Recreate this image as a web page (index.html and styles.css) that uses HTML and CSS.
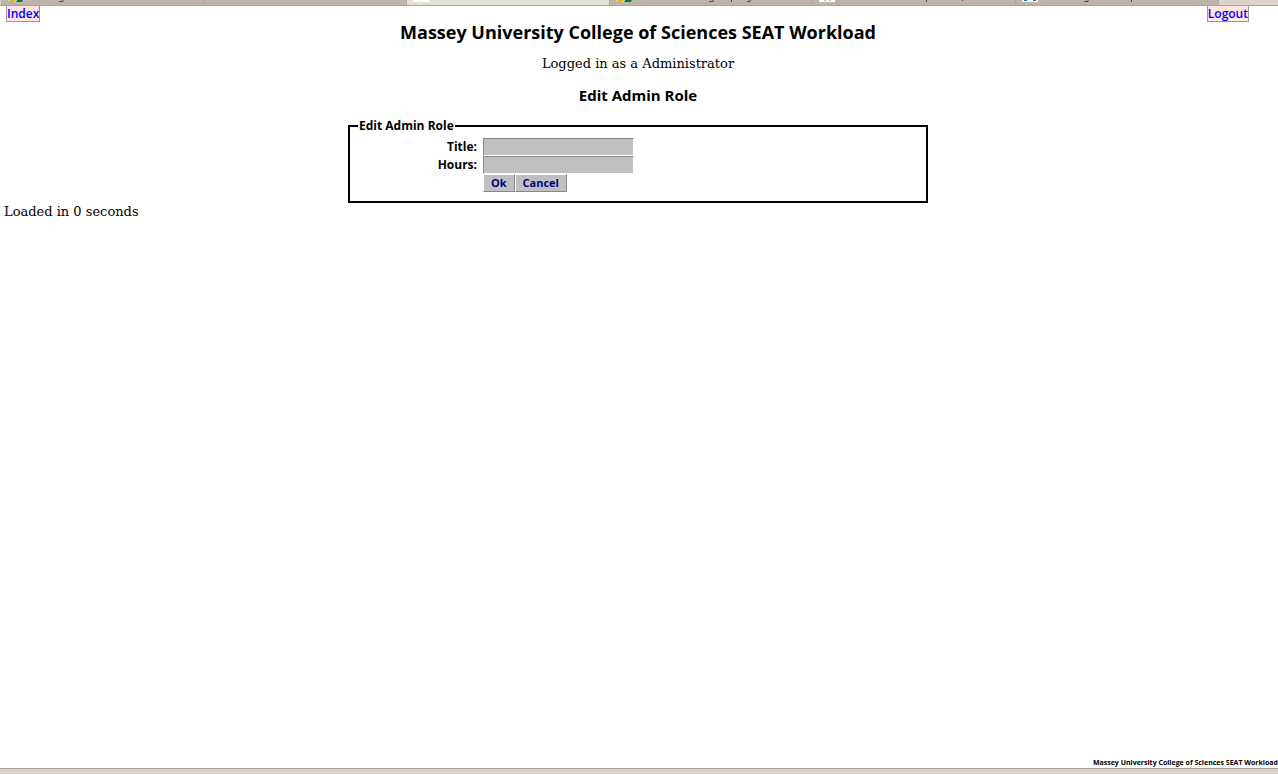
FILE: index.html
```html
<!DOCTYPE html>
<html lang="en">
<head>
<meta charset="utf-8">
<title>Edit Admin Role</title>
<link rel="stylesheet" href="styles.css">
</head>
<body>
<div class="tabs" aria-hidden="true">
  <div class="tab"><svg class="fav" viewBox="0 0 16 6"><path d="M1 0h15l-1 2H3z" fill="#fff"/><path d="M2 0h7l-1 2H3z" fill="#f4ad1c"/><path d="M10 0h6l-1 2H9z" fill="#047a3c"/></svg><svg class="descenders" viewBox="0 0 180 6"><path d="M36 1.500h4V0" class="ink"/></svg></div>
  <div class="tab"></div>
  <div class="tab active"><svg class="fav" viewBox="0 0 16 6"><path d="M0 0h7v2H0zM8 0h8v2H8z" fill="#fff"/></svg></div>
  <div class="tab"><svg class="fav" viewBox="0 0 16 6"><path d="M0 0h16l-1 2H2z" fill="#fff"/><path d="M1 0h7l-1 2H2z" fill="#f4ad1c"/><path d="M9 0h7l-1 2H8z" fill="#047a3c"/></svg><svg class="descenders" viewBox="0 0 180 6"><path d="M77 1.500h4V0M99.500 0v2M115 1.500h3V0" class="ink"/></svg></div>
  <div class="tab"><svg class="fav" viewBox="0 0 16 6"><path d="M0 0h16v2H0z" fill="#fff"/><path d="M5 0h2v1H5zM10 0h2v1h-2z" fill="#b8b8c0"/></svg><svg class="descenders" viewBox="0 0 180 6"><path d="M91.500 0v2M127.500 0v1" class="ink"/></svg></div>
  <div class="tab"><svg class="fav" viewBox="0 0 16 6"><path d="M0 0h16v2H0z" fill="#fff"/><path d="M2 0h3v1H2zM11 0h3v1h-3z" fill="#1c69aa"/></svg><svg class="descenders" viewBox="0 0 180 6"><path d="M46 1.500h4V0M93.500 0v2" class="ink"/></svg></div>
</div>
<nav class="links"><a href="#index">Index</a><a href="#logout">Logout</a></nav>
<main>
  <h1>Massey University College of Sciences SEAT Workload</h1>
  <p class="user">Logged in as a Administrator</p>
  <h2>Edit Admin Role</h2>
  <form>
    <fieldset>
      <legend>Edit Admin Role</legend>
      <div class="grid">
        <label for="title">Title:</label><input id="title" type="text">
        <label for="hours">Hours:</label><input id="hours" type="text">
        <div class="actions"><button type="button">Ok</button><button type="button">Cancel</button></div>
      </div>
    </fieldset>
  </form>
  <p class="loaded">Loaded in 0 seconds</p>
</main>
<footer>Massey University College of Sciences SEAT Workload</footer>
<div class="status"></div>
</body>
</html>
```
FILE: styles.css
```css
* { box-sizing: border-box; }
body {
  margin: 0;
  min-height: 100vh;
  display: flex;
  flex-direction: column;
  background: #fff;
  color: #000;
  font: bold 13px/18px "Trebuchet MS", "Open Sans", sans-serif;
}
.tabs { display: flex; height: 6px; padding-left: 1px; background: #d9d5cc; border-bottom: 1px solid #aea198; overflow: hidden; }
.tab { display: flex; flex: 0 1 203px; padding-left: 6px; background: #bdb5a8; border-right: 1px solid #aea79b; }
.tab.active { height: 6px; background: #e4e1d9; }
.fav { flex: none; width: 16px; height: 6px; }
.descenders { flex: none; width: 180px; height: 6px; }
.ink { fill: none; stroke: #4d4943; stroke-width: 1; }
.links { display: flex; justify-content: space-between; padding: 0 29px 0 6px; }
.links a {
  height: 16px;
  line-height: 16px;
  font-size: 12px;
  font-weight: 600;
  text-decoration: none;
  color: #00f;
  background: #ffe4e4;
  border: 1px solid #999;
  border-top: 0;
}
main { display: flex; flex-direction: column; flex: 1; padding-right: 2px; }
h1, h2, p { margin: 0; text-align: center; }
h1 { font-size: 18px; line-height: 20px; }
h2 { margin-top: 12px; font-size: 15px; line-height: 20px; }
.user, .loaded { font: 13px/18px "DejaVu Serif", serif; }
.user { margin-top: 13px; }
.loaded { padding-left: 4px; text-align: left; }
form { display: flex; justify-content: center; margin-top: 12px; }
fieldset { width: 580px; margin: 0; padding: 3px 8px 9px; border: 2px solid #000; }
legend { padding: 0 1px; font-size: 12px; }
.grid { display: grid; grid-template-columns: 119px 151px; column-gap: 6px; font-size: 12px; }
label { text-align: right; line-height: 18px; }
input { width: 100%; height: 18px; padding: 0 2px; border: 1px solid #fff; border-top-color: #888; border-left-color: #888; background: silver; }
.actions { grid-column: 2; display: flex; }
button { height: 18px; padding: 0 7px; border: 1px solid #888; border-top-color: #fff; border-left-color: #fff; background: silver; color: navy; font: bold 11px/14px "Trebuchet MS", "Open Sans", sans-serif; }
footer { text-align: right; font-size: 7px; line-height: 10px; }
.status { height: 6px; background: #d9d5cc; border-top: 1px solid #aea198; }
```
